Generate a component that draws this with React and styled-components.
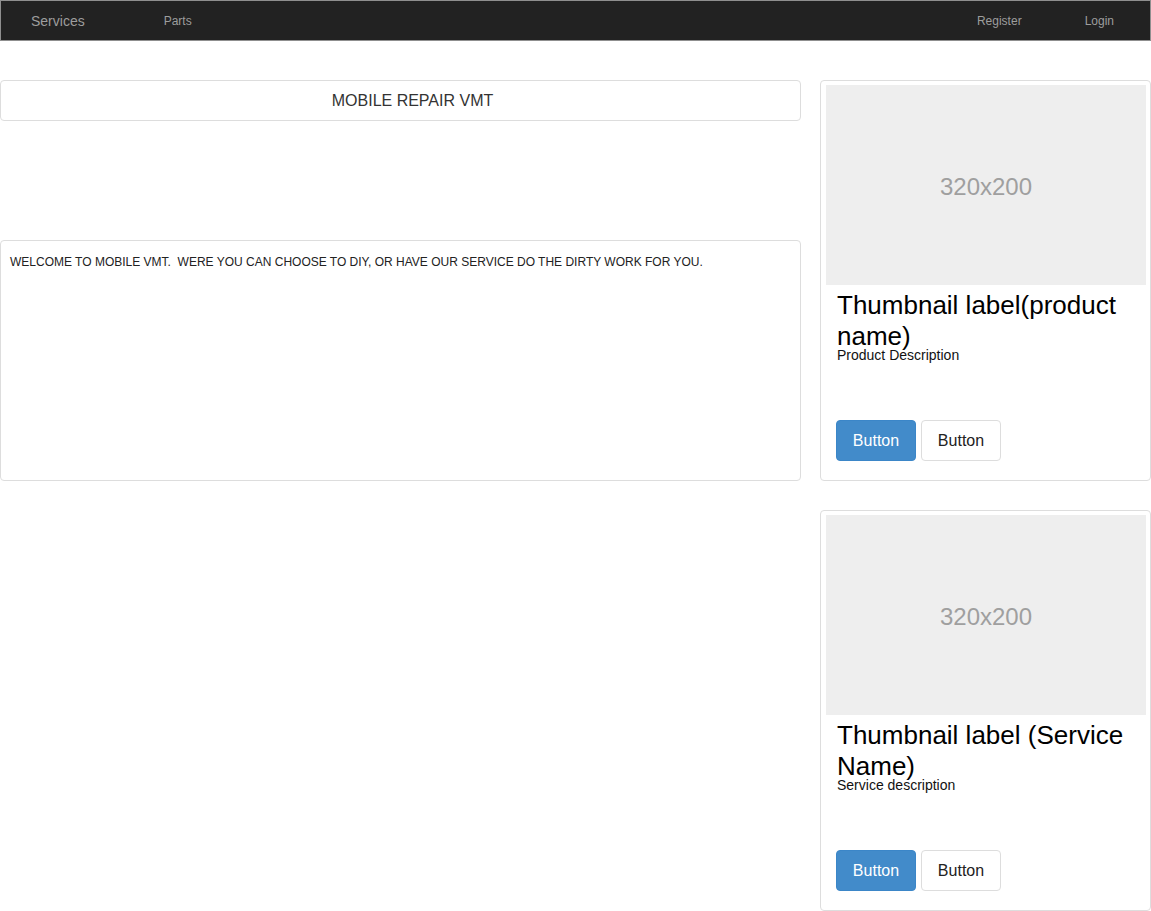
import React from "react";
import styled, { createGlobalStyle } from "styled-components";

const GlobalStyle = createGlobalStyle`
  html, body { margin: 0; padding: 0; background: #fff; }
  body { font-family: "Liberation Sans", Arial, sans-serif; color: #333; }
  * { box-sizing: border-box; }
`;

const NavBar = styled.nav`
  height: 41px;
  width: 1151px;
  background: #222;
  border: 1px solid #8f8f8f;
  display: flex;
  align-items: center;
  justify-content: space-between;
`;

const NavGroup = styled.div`
  display: flex;
  align-items: center;
  gap: ${(p) => p.$gap}px;
  padding: 0 ${(p) => p.$padR || 0}px 0 ${(p) => p.$padL || 0}px;
`;

const NavLink = styled.a`
  color: #9d9d9d;
  font-size: ${(p) => (p.$big ? 14 : 12)}px;
  text-decoration: none;
  line-height: 20px;
`;

const Main = styled.main`
  display: grid;
  grid-template-columns: 801px 331px;
  column-gap: 19px;
  margin-top: 39px;
  width: 1151px;
`;

const LeftCol = styled.div`
  display: flex;
  flex-direction: column;
  gap: 119px;
`;

const RightCol = styled.div`
  display: flex;
  flex-direction: column;
  gap: 29px;
`;

const Panel = styled.div`
  border: 1px solid #ddd;
  border-radius: 4px;
  background: #fff;
`;

const TitlePanel = styled(Panel)`
  height: 41px;
  display: flex;
  align-items: center;
  justify-content: center;
  padding-left: 24px;
  font-size: 16px;
  color: #333;
`;

const WelcomePanel = styled(Panel)`
  height: 241px;
  padding: 14px 9px;
  font-size: 12px;
  line-height: 14px;
  color: #222;
  white-space: pre;
`;

const Card = styled(Panel)`
  height: 401px;
  padding: 4px 4px 0 5px;
  display: flex;
  flex-direction: column;
`;

const Placeholder = styled.div`
  width: 320px;
  height: 200px;
  padding-top: 3px;
  background: #eee;
  color: #9f9f9f;
  font-size: 24px;
  display: flex;
  align-items: center;
  justify-content: center;
`;

const Caption = styled.div`
  flex: 1;
  display: flex;
  flex-direction: column;
  padding: 5px 11px 19px 10px;
`;

const CardTitle = styled.h3`
  margin: 0 0 -5px 1px;
  font-size: 26px;
  font-weight: 400;
  line-height: 31px;
  color: #000;
`;

const CardText = styled.p`
  margin: 0 0 0 1px;
  font-size: 14px;
  line-height: 16px;
  color: #111;
`;

const ButtonRow = styled.div`
  margin-top: auto;
  display: flex;
  gap: 5px;
`;

const Button = styled.button`
  height: 41px;
  padding: 0 15px;
  font-family: "Liberation Sans", Arial, sans-serif;
  font-size: 16px;
  border-radius: 4px;
  border: 1px solid ${(p) => (p.$primary ? "#3b86c8" : "#ddd")};
  background: ${(p) => (p.$primary ? "#428bca" : "#fff")};
  color: ${(p) => (p.$primary ? "#fff" : "#222")};
  width: 80px;
`;

function ThumbCard({ title, text }) {
  return (
    <Card>
      <Placeholder>320x200</Placeholder>
      <Caption>
        <CardTitle>{title}</CardTitle>
        <CardText>{text}</CardText>
        <ButtonRow>
          <Button $primary>Button</Button>
          <Button>Button</Button>
        </ButtonRow>
      </Caption>
    </Card>
  );
}

export default function App() {
  return (
    <>
      <GlobalStyle />
      <NavBar>
        <NavGroup $gap={79} $padL={30}>
          <NavLink $big href="#">Services</NavLink>
          <NavLink href="#">Parts</NavLink>
        </NavGroup>
        <NavGroup $gap={63} $padR={36}>
          <NavLink href="#">Register</NavLink>
          <NavLink href="#">Login</NavLink>
        </NavGroup>
      </NavBar>
      <Main>
        <LeftCol>
          <TitlePanel>MOBILE REPAIR VMT</TitlePanel>
          <WelcomePanel>
            {"WELCOME TO MOBILE VMT.  WERE YOU CAN CHOOSE TO DIY, OR HAVE OUR SERVICE DO THE DIRTY WORK FOR YOU."}
          </WelcomePanel>
        </LeftCol>
        <RightCol>
          <ThumbCard title="Thumbnail label(product name)" text="Product Description" />
          <ThumbCard title="Thumbnail label (Service Name)" text="Service description" />
        </RightCol>
      </Main>
    </>
  );
}
